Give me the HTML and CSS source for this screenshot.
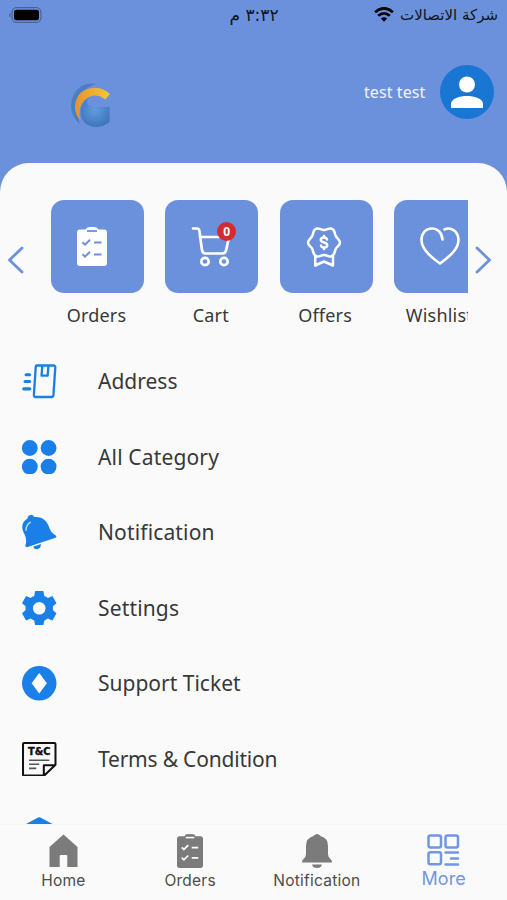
FILE: index.html
```html
<!DOCTYPE html>
<html lang="en">
<head>
<meta charset="utf-8">
<title>More</title>
<link rel="stylesheet" href="styles.css">
</head>
<body>
<svg class="defs" width="0" height="0">
  <defs>
    <linearGradient id="gold"><stop stop-color="#e8912f"/><stop offset="1" stop-color="#f6c838"/></linearGradient>
    <radialGradient id="globe" cx=".5" cy=".4" r=".6"><stop stop-color="#629bdc"/><stop offset="1" stop-color="#3d76bd"/></radialGradient>
    <mask id="checks"><path fill="#fff" d="M0 0h30v40H0z"/><path d="M5.500 15.200l2.500 2.500 5-5M17 15.500h7.500M5.500 27.200l2.500 2.500 5-5M17 27.500h7.500" fill="none" stroke="#000" stroke-width="2"/><path d="M10 4h10" stroke="#000" stroke-width="1.800"/></mask>
    <symbol id="clipboard" viewBox="0 0 30 39">
      <path mask="url(#checks)" fill="currentColor" d="M3 2.500h5.500q1-2.500 4-2.500h5q3 0 4 2.500H27q3 0 3 3v30.500q0 3-3 3H3q-3 0-3-3V5.500q0-3 3-3z"/>
    </symbol>
  </defs>
</svg>
<div class="app">
  <header class="header">
    <div class="status">
      <svg class="battery" width="34" height="16" viewBox="0 0 34 16"><rect x="4" y=".7" width="29" height="14.600" rx="4.300" fill="none" stroke="#425884" stroke-width="1"/><rect x="6" y="2.700" width="25" height="10.600" rx="2.300"/><path d="M2.500 5.500v5q-2.500-2.500 0-5" fill="#425884"/></svg>
      <span class="clock" dir="rtl">٣:٣٢ م</span>
      <div class="carrier">
        <svg width="20" height="15" viewBox="0 0 20 15"><g fill="none" stroke="#000" stroke-width="2.700"><path d="M1 5.300q9-8 18 0M4.200 8.800q5.800-5 11.600 0"/></g><path d="M6.800 11.500q3.200-2.700 6.400 0L10 14.700z"/></svg>
        <span dir="rtl">شركة الاتصالات</span>
      </div>
    </div>
    <div class="account">
      <svg class="logo" width="42" height="48" viewBox="0 0 42 48">
        <path d="M27 2Q10-1 3 14-3 31 10 42 3 20 14 9 20 3 27 2z" fill="#487fc7"/>
        <path d="M26 25h13.500v15Q31 47 20 44 10 40 10.500 29q.5-8 7.500-12.500-4 8 8 8.500z" fill="url(#globe)"/>
        <path d="M10.500 38C7 26 13 15 24 13.500q6-.5 11 4l5-5.500C29 2 13 5 7.500 15 3 24 5 33 10.500 38z" fill="url(#gold)"/>
      </svg>
      <span class="user">test test</span>
      <svg class="avatar" width="54" height="54" viewBox="0 0 54 54"><circle cx="27" cy="27" r="27" fill="#1976d2"/><circle cx="27" cy="19.500" r="8" fill="#fff"/><path d="M11 43v-4c0-5.500 9-8 16-8s16 2.500 16 8v4z" fill="#fff"/></svg>
    </div>
  </header>
  <main class="panel">
    <section class="shortcuts">
      <svg class="arrow" width="17" height="28" viewBox="0 0 17 28"><path d="M15 2L2.500 14 15 26"/></svg>
      <div class="strip">
        <div class="shortcut"><div class="tile"><svg class="t-orders" width="30" height="39"><use href="#clipboard"/></svg></div><span>Orders</span></div>
        <div class="shortcut"><div class="tile">
          <svg class="t-cart" width="40" height="40" viewBox="0 0 40 40" fill="none" stroke="#fff" stroke-width="2.700" stroke-linecap="round" stroke-linejoin="round"><path d="M2 1.500h4q2 0 2.300 2L11 23q.5 3.500 3.500 3.500h17q3 0 3.700-3.500L38 10H9.500"/><circle cx="14" cy="34.500" r="3.700"/><circle cx="33" cy="34.500" r="3.700"/></svg>
          <b class="badge">0</b></div><span>Cart</span></div>
        <div class="shortcut"><div class="tile">
          <svg class="t-offer" width="34" height="40" viewBox="0 0 34 40" fill="none" stroke="#fff" stroke-width="2.500" stroke-linejoin="round" stroke-linecap="round"><path d="M10 1.500c2.500-.5 4 1.500 7 1.500s4.500-2 7-1.500c4 .8 3.500 4.500 4.500 7s4.500 4 4.500 7-3.500 4.500-4.500 7-.5 6-4.500 7c-2.500.5-4-1.500-7-1.500s-4.500 2-7 1.500c-4-1-3.500-4.500-4.500-7S1 18.500 1 15.500s3.500-4.500 4.500-7S6 2.300 10 1.500z"/><path d="M8.200 29.500v9L17 34.500l9 4v-9"/><path d="M20 12.500q-.5-2-3-2-3.200 0-3.200 2.300 0 2 3.200 2.600 3.200.6 3.200 2.800 0 2.300-3.200 2.300-2.800 0-3-2M17 9v1.500M17 20.500V22"/></svg></div><span>Offers</span></div>
        <div class="shortcut"><div class="tile">
          <svg class="t-heart" width="40" height="38" viewBox="0 0 40 38" fill="none" stroke="#fff" stroke-width="2.600" stroke-linecap="round" stroke-linejoin="round"><path d="M22.500 12.500C22 5 17 1.500 12 1.500 5 1.500 1.500 7 1.500 13c0 9 9 17 18.500 23.500C30 29 38.500 22 38.500 13c0-7-5-11.500-10-11.500q-2 0-4 1"/></svg></div><span>Wishlist</span></div>
      </div>
      <svg class="arrow" width="17" height="28" viewBox="0 0 17 28"><path d="M2 2l12.500 12L2 26"/></svg>
    </section>
    <ul class="menu">
      <li><svg viewBox="0 0 34 34" fill="none" stroke="#1a80e8" stroke-width="2.300" stroke-linejoin="round" stroke-linecap="round"><path d="M14.500 1.500H31q2 0 1.800 2L31 30.500q-.2 2-2 2H13.500q-2 0-1.800-2l1.800-27q.1-2 1-2zM20 2l-.7 9.500h6L26 2"/><path stroke-width="3" d="M4 10.500h3.500M3 17.300h4.500M1.700 24.500h6"/></svg><span class="m1">Address</span></li>
      <li><svg viewBox="0 0 34 34" fill="#1a80e8"><circle cx="7.700" cy="7.900" r="7.800"/><circle cx="26.200" cy="7.900" r="7.800"/><circle cx="7.700" cy="26.200" r="7.800"/><circle cx="26.200" cy="26.200" r="7.800"/></svg><span class="m2">All Category</span></li>
      <li><svg viewBox="0 0 34 34" fill="#1a80e8"><path d="M5.500 3.500C5 0 11-1.500 12 2c6-.8 11 2 13.500 7 2 4 2 7.500 7.500 11 1.200.9 1.200 2 0 2.400L5.500 31.500c-2 .6-2.500-.5-2-2C5 25 3.500 20.500 1.500 17-1.500 11 1 6 5.500 3.500zM11 31.200l7.500-2.500q.5 4-3.500 5-3 .3-4-2.500z"/><path d="M4 15.500Q3.500 10 8.500 7" fill="none" stroke="#fff" stroke-opacity=".8" stroke-width="1.200"/></svg><span class="m3">Notification</span></li>
      <li><svg viewBox="0 0 34 34"><path fill="#1a80e8" fill-rule="evenodd" d="M13 0h8l1 5q2 .7 3.500 1.800L30 5l4 7-3.500 3v4l3.500 3-4 7-4.500-1.800Q24 28.300 22 29l-1 5h-8l-1-5q-2-.7-3.500-1.800L4 29l-4-7 3.500-3v-4L0 12l4-7 4.500 1.800Q10 5.700 12 5zM17 10.800a6.200 6.200 0 1 0 0 12.400 6.200 6.200 0 1 0 0-12.400z"/></svg><span class="m4">Settings</span></li>
      <li><svg viewBox="0 0 34 34"><circle cx="17" cy="17" r="17" fill="#1a80e8"/><path fill="#fff" d="M17 7l7.500 10L17 27 9.500 17z"/></svg><span class="m5">Support Ticket</span></li>
      <li><svg viewBox="0 0 34 34" fill="none" stroke="#111" stroke-width="2" stroke-linejoin="round"><path d="M2 1h30q1 0 1 1v20.500L22 33H2q-1 0-1-1V2q0-1 1-1zM21.500 32.500V23H33"/><path stroke="#555" stroke-width="1.500" d="M7 18h20M7 22h10M7 26h7"/><text x="17" y="13" textLength="22" lengthAdjust="spacingAndGlyphs" text-anchor="middle" class="tc">T&amp;C</text></svg><span class="m6">Terms &amp; Condition</span></li>
      <li><svg viewBox="0 0 34 34" fill="#1a80e8"><path d="M15 1q2-1.500 4 0L34 9v25H0V9z"/></svg></li>
    </ul>
  </main>
  <nav class="tabs">
    <a><svg width="29" height="33" viewBox="0 0 29 33"><path fill="currentColor" d="M14.500.5L28.500 13v20H18.300V22q0-1-1-1h-5.600q-1 0-1 1v11H.500V13z"/></svg><span class="n1">Home</span></a>
    <a><svg width="26" height="34"><use href="#clipboard"/></svg><span class="n2">Orders</span></a>
    <a><svg width="30" height="34" viewBox="0 0 30 34"><path fill="currentColor" d="M11.500 2q3.500-4 7 0Q26 4 26 12v8q0 3 2.500 5 3 3.500 0 3.500h-27q-3 0 0-3.500Q4 23 4 20v-8q0-8 7.500-10zM10 30.500h10q-1 3.500-5 3.500t-5-3.500z"/></svg><span class="n3">Notification</span></a>
    <a class="active"><svg width="33" height="32" viewBox="0 0 33 32" fill="none" stroke="currentColor" stroke-width="2.500" stroke-linecap="round"><rect x="1.500" y="1.500" width="12.500" height="12" rx="2"/><rect x="18.500" y="1.500" width="12.500" height="12" rx="2"/><rect x="1.500" y="18.300" width="12.500" height="12" rx="2"/><path d="M18.500 18.500H31M24 24.500h7M18.500 30.500H31"/></svg><span class="n4">More</span></a>
  </nav>
</div>
</body>
</html>
```
FILE: styles.css
```css
* { box-sizing: border-box; }
body { margin: 0; font-family: "Noto Sans", sans-serif; color: #383838; }
svg { display: block; flex: none; }
.defs { position: absolute; }
.app { width: 507px; height: 900px; display: flex; flex-direction: column; overflow: hidden; background: #6c91dc; }
.header { height: 163px; flex: none; }
.status { height: 29px; padding: 0 9px 0 8px; display: grid; grid-template-columns: 1fr auto 1fr; align-items: center; color: #101420; font: 15px "DejaVu Sans", sans-serif; }
.clock { padding-left: 2px; font-size: 17px; white-space: nowrap; }
.carrier { display: flex; gap: 6px; justify-content: flex-end; align-items: center; white-space: nowrap; }
.account { display: flex; align-items: flex-start; padding: 36px 13.500px 0 70px; }
.logo { margin-top: 17px; }
.user { margin-left: auto; margin-right: 14px; color: #f0f4fc; font-size: 16px; letter-spacing: .1px; line-height: 54px; }
.panel { flex: 1; min-height: 0; overflow: hidden; background: #fafafa; border-radius: 29px 29px 0 0; }
.shortcuts { display: flex; padding: 37px 0 0 7px; }
.arrow { margin-top: 46px; fill: none; stroke: #6c91dc; stroke-width: 2.800; stroke-linecap: round; stroke-linejoin: round; }
.strip { width: 417px; margin: 0 7px 0 27px; display: flex; gap: 21.300px; overflow: hidden; }
.shortcut { width: 93px; flex: none; display: flex; flex-direction: column; align-items: center; font-size: 18px; line-height: 24px; gap: 10px; white-space: nowrap; }
.shortcut span { margin-right: 2px; letter-spacing: .2px; }
.tile { position: relative; width: 93px; height: 93px; border-radius: 13px; background: #6c91dc; color: #fff; }
.tile svg { margin: 27px auto 0 26px; }
.tile .t-offer { margin-left: 27px; }
.badge { position: absolute; left: 52px; top: 21.500px; width: 19px; height: 19px; border-radius: 50%; background: #d42b30; font-size: 12px; line-height: 19px; text-align: center; }
.menu { list-style: none; margin: 16.500px 0 0; padding: 0 0 0 22px; }
.menu li { height: 75.500px; display: flex; align-items: center; gap: 41.500px; font-size: 21px; white-space: nowrap; }
.menu svg { width: 34.500px; height: 34.500px; }
.menu .m2, .menu .m3, .menu .m4 { letter-spacing: .15px; }
.menu .m6 { letter-spacing: -.2px; }
.tc { font: bold 10px "DejaVu Sans", sans-serif; fill: #111; stroke: #111; stroke-width: .4; }
.tabs { height: 76px; flex: none; display: grid; grid-template-columns: repeat(4, 1fr); background: #fafafa; border-top: 1px solid #f6f6f6; font: 15.500px/18px Inter, sans-serif; color: #4c4c4c; }
.tabs a { display: flex; flex-direction: column; align-items: center; justify-content: space-between; padding: 9px 0 10px; }
.tabs svg { color: #7b7b7b; }
.tabs .n1, .tabs .n2, .tabs .n3 { letter-spacing: .25px; }
.tabs .active, .tabs .active svg { color: #7197de; }
.tabs .active { font-size: 18px; padding-bottom: 12px; }
```
